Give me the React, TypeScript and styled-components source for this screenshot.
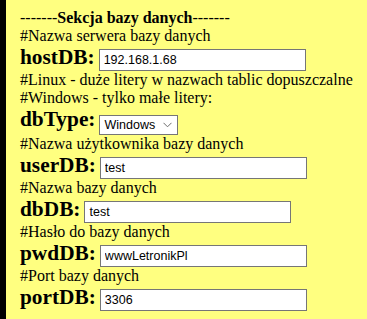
import styled, { createGlobalStyle } from "styled-components";

const GlobalStyle = createGlobalStyle`
  html, body {
    margin: 0;
    padding: 0;
    background: #ffff80;
  }
`;

type Field = {
  comments: string[];
  label: string;
  value: string;
  select?: boolean;
};

const fields: Field[] = [
  { comments: ["#Nazwa serwera bazy danych"], label: "hostDB:", value: "192.168.1.68" },
  {
    comments: [
      "#Linux - duże litery w nazwach tablic dopuszczalne",
      "#Windows - tylko małe litery:",
    ],
    label: "dbType:",
    value: "Windows",
    select: true,
  },
  { comments: ["#Nazwa użytkownika bazy danych"], label: "userDB:", value: "test" },
  { comments: ["#Nazwa bazy danych"], label: "dbDB:", value: "test" },
  { comments: ["#Hasło do bazy danych"], label: "pwdDB:", value: "wwwLetronikPl" },
  { comments: ["#Port bazy danych"], label: "portDB:", value: "3306" },
];

const App = () => {
  return (
    <Panel>
      <GlobalStyle />
      <Line>
        -------<b>Sekcja bazy danych</b>-------
      </Line>
      {fields.map((f) => (
        <div key={f.label}>
          {f.comments.map((c) => (
            <Line key={c}>{c}</Line>
          ))}
          <Row>
            <Label>{f.label}</Label>{" "}
            {f.select ? (
              <SelectBox>
                <span>{f.value}</span>
                <svg width="9" height="6" viewBox="0 0 9 6">
                  <polyline
                    points="0.5,0.8 4.5,4.8 8.5,0.8"
                    fill="none"
                    stroke="#6d6d6d"
                    strokeWidth="1"
                  />
                </svg>
              </SelectBox>
            ) : (
              <Input type="text" defaultValue={f.value} />
            )}
          </Row>
        </div>
      ))}
    </Panel>
  );
};

export default App;

const Panel = styled.div`
  min-height: 100vh;
  box-sizing: border-box;
  background: #ffff80;
  border-left: 6px solid #000;
  padding: 9px 14px 8px;
  font-family: "Liberation Serif", "Times New Roman", serif;
  font-size: 16px;
  color: #000;
`;

const Line = styled.div`
  white-space: nowrap;
`;

const Row = styled.div`
  white-space: nowrap;
`;

const Label = styled.b`
  font-size: 16pt;
`;

const Input = styled.input`
  box-sizing: border-box;
  width: 207px;
  height: 22px;
  margin: 0;
  padding: 0 4px;
  border: 1px solid #767676;
  border-radius: 0;
  background: #fff;
  font-family: "Liberation Sans", Arial, sans-serif;
  font-size: 12.5px;
  color: #000;
  outline: none;
`;

const SelectBox = styled.span`
  display: inline-flex;
  align-items: center;
  justify-content: space-between;
  box-sizing: border-box;
  width: 79px;
  height: 20px;
  padding: 0 5px 0 4px;
  border: 1px solid #767676;
  background: #fff;
  font-family: "Liberation Sans", Arial, sans-serif;
  font-size: 12.5px;
  color: #000;
  vertical-align: -3px;
`;
